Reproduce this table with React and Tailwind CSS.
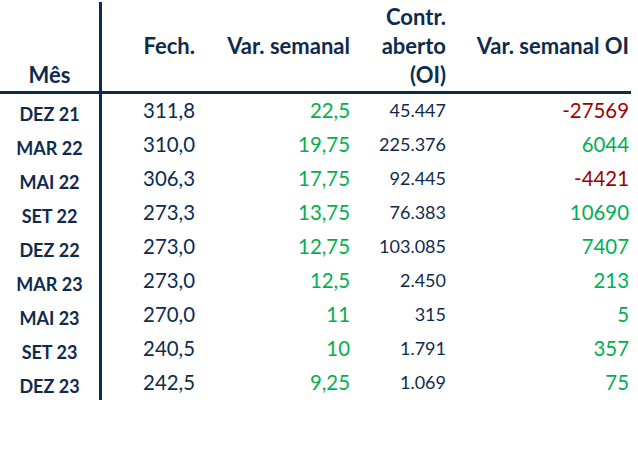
const rows = [
  { mes: 'DEZ 21', fech: '311,8', varSem: '22,5', oi: '45.447', varOi: '-27569' },
  { mes: 'MAR 22', fech: '310,0', varSem: '19,75', oi: '225.376', varOi: '6044' },
  { mes: 'MAI 22', fech: '306,3', varSem: '17,75', oi: '92.445', varOi: '-4421' },
  { mes: 'SET 22', fech: '273,3', varSem: '13,75', oi: '76.383', varOi: '10690' },
  { mes: 'DEZ 22', fech: '273,0', varSem: '12,75', oi: '103.085', varOi: '7407' },
  { mes: 'MAR 23', fech: '273,0', varSem: '12,5', oi: '2.450', varOi: '213' },
  { mes: 'MAI 23', fech: '270,0', varSem: '11', oi: '315', varOi: '5' },
  { mes: 'SET 23', fech: '240,5', varSem: '10', oi: '1.791', varOi: '357' },
  { mes: 'DEZ 23', fech: '242,5', varSem: '9,25', oi: '1.069', varOi: '75' },
];

export default function App() {
  return (
    <div
      className="h-[450px] w-[638px] bg-white pt-[2px] text-[#0f2b4c]"
      style={{ fontFamily: 'Lato, "Open Sans", sans-serif' }}
    >
      <div className="w-[631px]">
        {/* cabeçalho */}
        <div className="flex h-[92px] border-b-[3px] border-[#0f2b4c] text-[22px] font-bold leading-[29px]">
          <div className="w-[102px] border-r-[3px] border-[#0f2b4c] pt-[58px] text-center">Mês</div>
          <div className="w-[93px] pt-[29px] text-right">Fech.</div>
          <div className="w-[155px] pt-[29px] text-right">Var. semanal</div>
          <div className="w-[96px] text-right">
            Contr.
            <br />
            aberto
            <br />
            (OI)
          </div>
          <div className="w-[185px] pt-[29px] pr-[2px] text-right">Var. semanal OI</div>
        </div>

        {rows.map((r) => (
          <div key={r.mes} className="flex h-[34px] leading-[28px]">
            <div className="w-[102px] border-r-[3px] border-[#0f2b4c] pt-[6px] text-center text-[18px] font-bold">
              {r.mes}
            </div>
            <div className="w-[93px] pt-[1.5px] text-right text-[20.4px]">{r.fech}</div>
            <div className="w-[155px] pt-[1.5px] text-right text-[20.4px] text-[#00b050]">{r.varSem}</div>
            <div className="w-[96px] pt-[2px] text-right text-[18px]">{r.oi}</div>
            <div
              className={`w-[185px] pt-[1.5px] pr-[2px] text-right text-[20.4px] ${
                r.varOi.startsWith('-') ? 'text-[#a00000]' : 'text-[#00b050]'
              }`}
            >
              {r.varOi}
            </div>
          </div>
        ))}
      </div>
    </div>
  );
}
